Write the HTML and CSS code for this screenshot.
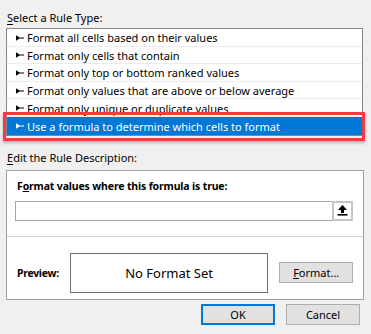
FILE: index.html
```html
<!DOCTYPE html>
<html lang="en">
<head>
    <meta charset="UTF-8">
    <title>New Formatting Rule</title>
    <link rel="stylesheet" href="styles.css">
</head>
<body>
    <div class="dialog">
        <div class="section-label"><u>S</u>elect a Rule Type:</div>
        <ul class="rule-list">
            <li><svg class="arrow" viewBox="0 0 9 6"><polygon points="0,0 0,6 4,3.7 9,3.7 9,2.3 4,2.3"/></svg>Format all cells based on their values</li>
            <li><svg class="arrow" viewBox="0 0 9 6"><polygon points="0,0 0,6 4,3.7 9,3.7 9,2.3 4,2.3"/></svg>Format only cells that contain</li>
            <li><svg class="arrow" viewBox="0 0 9 6"><polygon points="0,0 0,6 4,3.7 9,3.7 9,2.3 4,2.3"/></svg>Format only top or bottom ranked values</li>
            <li><svg class="arrow" viewBox="0 0 9 6"><polygon points="0,0 0,6 4,3.7 9,3.7 9,2.3 4,2.3"/></svg>Format only values that are above or below average</li>
            <li><svg class="arrow" viewBox="0 0 9 6"><polygon points="0,0 0,6 4,3.7 9,3.7 9,2.3 4,2.3"/></svg>Format only unique or duplicate values</li>
            <li class="selected"><svg class="arrow" viewBox="0 0 9 6"><polygon points="0,0 0,6 4,3.7 9,3.7 9,2.3 4,2.3"/></svg>Use a formula to determine which cells to format</li>
        </ul>

        <div class="section-label edit-label"><u>E</u>dit the Rule Description:</div>
        <div class="rule-box">
            <div class="formula-title">F<u>o</u>rmat values where this formula is true:</div>
            <div class="formula-input">
                <span class="field"></span>
                <span class="ref-btn">
                    <svg viewBox="0 0 11 11"><polygon points="5.5,0 10,5 7,5 7,8 4,8 4,5 1,5"/><rect x="0.5" y="9" width="10" height="1.6"/></svg>
                </span>
            </div>
            <div class="preview-row">
                <span class="preview-label">Preview:</span>
                <div class="preview-box">No Format Set</div>
                <button class="btn format-btn"><u>F</u>ormat...</button>
            </div>
        </div>

        <div class="actions">
            <button class="btn primary">OK</button>
            <button class="btn">Cancel</button>
        </div>
    </div>
</body>
</html>
```

FILE: styles.css
```css
body {
    margin: 0;
    background-color: #f0f0f0;
    font-family: 'Noto Sans', 'Open Sans', sans-serif;
    font-size: 11px;
    color: #000;
}

.dialog {
    width: 371px;
    height: 334px;
    padding-top: 10px;
    box-sizing: border-box;
}

.section-label {
    line-height: 15px;
    padding-left: 7px;
    margin-bottom: 3px;
}

.section-label u {
    text-underline-offset: 2px;
}

.rule-list {
    list-style: none;
    margin: 0 8px 0 6px;
    padding: 0;
    background-color: #ffffff;
    border: 1px solid #828790;
}

.rule-list li {
    display: flex;
    align-items: center;
    height: 15.6px;
    padding: 1px 0 0 9px;
    border-bottom: 1px solid #ececec;
    position: relative;
}

.rule-list li:last-child {
    border-bottom: none;
    height: 16.6px;
}

.arrow {
    width: 8px;
    height: 6px;
    margin-right: 3px;
    fill: #000;
}

.rule-list li.selected {
    background-color: #0078d7;
    color: #ffffff;
}

.rule-list li.selected .arrow {
    fill: #ffffff;
}

/* red highlight frame drawn over the selected rule */
.rule-list li.selected::after {
    content: '';
    position: absolute;
    top: -5px;
    bottom: -6px;
    left: -4px;
    right: -3px;
    border: 3px solid #ee3f3f;
    box-shadow: 0 2px 3px rgba(0,0,0,0.25);
}

.edit-label {
    margin-top: 14px;
    margin-bottom: 5px;
}

.rule-box {
    margin: 0 7px 0 6px;
    background-color: #ffffff;
    border: 1px solid #a0a0a0;
    padding-top: 8px;
    padding-bottom: 6px;
}

.formula-title {
    font-weight: bold;
    font-size: 10.5px;
    letter-spacing: -0.15px;
    line-height: 15px;
    padding-left: 10px;
}

.formula-input {
    display: flex;
    margin: 7px 10px 0 8px;
    height: 20px;
    border: 1px solid #a6a6a6;
    box-sizing: border-box;
}

.field {
    flex: 1;
}

.ref-btn {
    width: 21px;
    height: 20px;
    margin: -1px -1px 0 0;
    box-sizing: border-box;
    border: 2px solid #c4c4c4;
    background-color: #ffffff;
    display: flex;
    align-items: center;
    justify-content: center;
}

.ref-btn svg {
    width: 11px;
    height: 11px;
    fill: #000;
}

.preview-row {
    display: flex;
    align-items: center;
    margin-top: 15px;
    border-top: 1px solid #d4d4d4;
    padding: 16px 10px 0 10px;
}

.preview-label {
    font-weight: bold;
    font-size: 10.5px;
    letter-spacing: -0.3px;
    width: 53px;
}

.preview-box {
    width: 200px;
    height: 40px;
    box-sizing: border-box;
    border: 1px solid #6e6e6e;
    display: flex;
    align-items: center;
    justify-content: center;
    font-size: 13px;
}

.btn {
    font-family: inherit;
    font-size: 11px;
    width: 74px;
    height: 21px;
    padding: 0;
    background-color: #e1e1e1;
    border: 1px solid #adadad;
    color: #000;
}

.format-btn {
    margin-left: 11px;
}

.btn.primary {
    border: 2px solid #0078d7;
}

.actions {
    display: flex;
    justify-content: flex-end;
    gap: 11px;
    margin-top: 4px;
    padding-right: 11px;
}
```
